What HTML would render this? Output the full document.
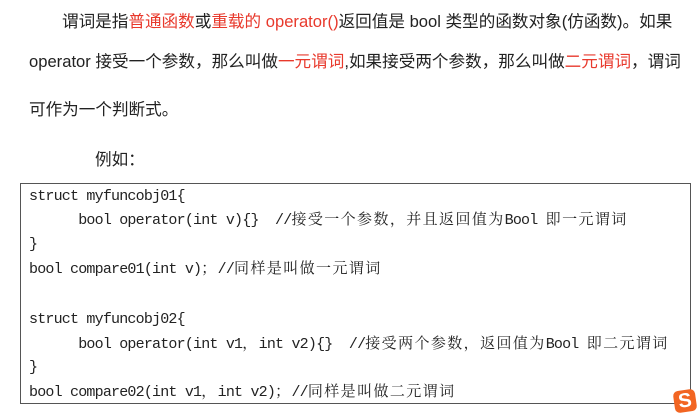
<!DOCTYPE html>
<html><head><meta charset="utf-8"><style>
body{margin:0;width:698px;height:416px;background:#fff;overflow:hidden;position:relative;font-family:"Liberation Sans","Noto Sans CJK SC",sans-serif;color:#222}
.t{position:absolute;font-size:16.6px;white-space:nowrap;line-height:20px}
.r{color:#e8392c}
.box{position:absolute;left:20px;top:183px;width:671px;height:221px;border:1px solid #555;box-sizing:border-box}
.c{position:absolute;left:29px;font-family:"Liberation Mono","Noto Serif CJK SC",serif;font-size:15px;letter-spacing:-0.8px;white-space:pre;line-height:18px;color:#222}
.k{letter-spacing:1.4px}
.s{position:absolute;left:674px;top:390px;width:22px;height:22px;background:#f26522;border-radius:5px;transform:rotate(-8deg);color:#fff;font:bold 20px/22px "Liberation Sans",sans-serif;text-align:center}
</style></head><body>
<div class="t" style="left:62px;top:12px">谓词是指<span class="r">普通函数</span>或<span class="r">重载的 operator()</span>返回值是 bool 类型的函数对象(仿函数)。如果</div>
<div class="t" style="left:29px;top:52px">operator 接受一个参数，那么叫做<span class="r">一元谓词</span>,如果接受两个参数，那么叫做<span class="r">二元谓词</span>，谓词</div>
<div class="t" style="left:29px;top:100px">可作为一个判断式。</div>
<div class="t" style="left:95px;top:150px">例如：</div>
<div class="box"></div>
<div class="c" style="top:188px">struct myfuncobj01{</div>
<div class="c" style="top:212px">      bool operator(int v){}  //<span class="k">接受一个参数，并且返回值为</span>Bool <span class="k">即一元谓词</span></div>
<div class="c" style="top:236px">}</div>
<div class="c" style="top:261px">bool compare01(int v)<span class="k">；</span>//<span class="k">同样是叫做一元谓词</span></div>
<div class="c" style="top:311px">struct myfuncobj02{</div>
<div class="c" style="top:336px">      bool operator(int v1<span class="k">，</span>int v2){}  //<span class="k">接受两个参数，返回值为</span>Bool <span class="k">即二元谓词</span></div>
<div class="c" style="top:359px">}</div>
<div class="c" style="top:384px">bool compare02(int v1<span class="k">，</span>int v2)<span class="k">；</span>//<span class="k">同样是叫做二元谓词</span></div>
<div class="s">S</div>
</body></html>
